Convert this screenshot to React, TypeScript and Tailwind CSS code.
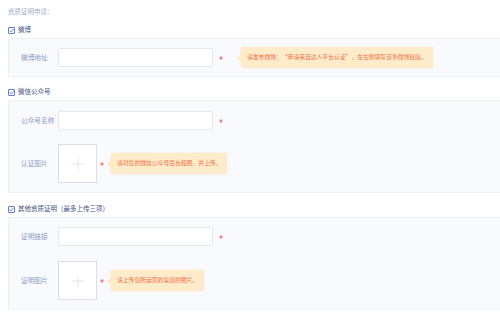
const font = { fontFamily: '"Noto Sans CJK SC", "Noto Sans", sans-serif' };

function CheckIcon() {
  return (
    <svg width="7" height="7" viewBox="0 0 7 7" className="shrink-0">
      <rect x="0.5" y="0.5" width="6" height="6" rx="0.4" fill="white" stroke="#4f72d8" strokeWidth="0.9" />
      <path d="M1.7 3.5 L3 4.8 L5.4 2.1" fill="none" stroke="#4f72d8" strokeWidth="0.9" />
    </svg>
  );
}

function Header({ text, className }: { text: string; className?: string }) {
  return (
    <div className={`flex h-[14px] items-center gap-[3px] text-[6.5px] text-[#44537e] ${className ?? ""}`}>
      <CheckIcon />
      <span>{text}</span>
    </div>
  );
}

function Tip({ text }: { text: string }) {
  return (
    <div className="relative flex h-[21px] items-center rounded-[2px] bg-[#fdebca] px-[6px] text-[5.8px] text-[#ef7144] shadow-[0_0_2px_rgba(240,180,100,0.35)]">
      <span className="absolute left-[-4px] top-1/2 h-0 w-0 -translate-y-1/2 border-y-[4px] border-r-[4px] border-y-transparent border-r-[#fdebca]" />
      {text}
    </div>
  );
}

function Star() {
  return (
    <svg width="4" height="4" viewBox="0 0 10 10" className="block">
      <path d="M5 0.5 V9.5 M1.1 2.75 L8.9 7.25 M1.1 7.25 L8.9 2.75" stroke="#e9655f" strokeWidth="2" />
    </svg>
  );
}

function Label({ text }: { text: string }) {
  return <div className="w-[37px] shrink-0 text-[6.7px] text-[#8d9dc6]">{text}</div>;
}

function Input() {
  return <div className="h-[19px] w-[155px] shrink-0 rounded-[2px] border border-[#e4e8f1] bg-white" />;
}

function Upload() {
  return (
    <div className="flex h-[39px] w-[39px] shrink-0 items-center justify-center border border-[#d9dfec] bg-white">
      <svg width="12" height="12" viewBox="0 0 12 12">
        <path d="M6 0.5 V11.5 M0.5 6 H11.5" stroke="#dde3ef" strokeWidth="1" />
      </svg>
    </div>
  );
}

function Panel({ children, className }: { children: React.ReactNode; className?: string }) {
  return (
    <div className={`border-y border-l border-[#edf0f6] bg-[#f9fafd] pl-[12px] ${className ?? ""}`}>{children}</div>
  );
}

export default function App() {
  return (
    <div className="h-[315px] w-[500px] overflow-hidden bg-white pl-[8px] pt-[6px]" style={font}>
      <div className="flex h-[12px] items-center text-[6.5px] text-[#a3aecb]">资质证明申请：</div>

      {/* 微博 */}
      <Header text="微博" className="mt-[5px] mb-[1px]" />
      <Panel className="pt-[8px] pb-[8px]">
        <div className="flex h-[21px] items-center">
          <Label text="微博地址" />
          <Input />
          <div className="ml-[6px] w-[5px]"><Star /></div>
          <div className="ml-[17px]">
            <Tip text="请发布微博：“申请来自达人平台认证”，在左侧填写该条微博链接。" />
          </div>
        </div>
      </Panel>

      {/* 微信公众号 */}
      <Header text="微信公众号" className="mt-[8px] mb-[1px]" />
      <Panel className="pt-[10px] pb-[9px]">
        <div className="flex h-[19px] items-center">
          <Label text="公众号名称" />
          <Input />
          <div className="ml-[6px] w-[5px]"><Star /></div>
        </div>
        <div className="mt-[14px] flex h-[39px] items-center">
          <Label text="认证图片" />
          <Upload />
          <div className="ml-[3px] w-[5px]"><Star /></div>
          <div className="ml-[6px]">
            <Tip text="请对您的微信公众号后台截图，并上传。" />
          </div>
        </div>
      </Panel>

      {/* 其他资质证明 */}
      <Header text="其他资质证明（最多上传三项）" className="mt-[9px] mb-[1px]" />
      <Panel className="pt-[9px] pb-[9px]">
        <div className="flex h-[19px] items-center">
          <Label text="证明链接" />
          <Input />
          <div className="ml-[6px] w-[5px]"><Star /></div>
        </div>
        <div className="mt-[15px] flex h-[39px] items-center">
          <Label text="证明图片" />
          <Upload />
          <div className="ml-[3px] w-[5px]"><Star /></div>
          <div className="ml-[6px]">
            <Tip text="请上传您所运营的渠道的图片。" />
          </div>
        </div>
      </Panel>
    </div>
  );
}
